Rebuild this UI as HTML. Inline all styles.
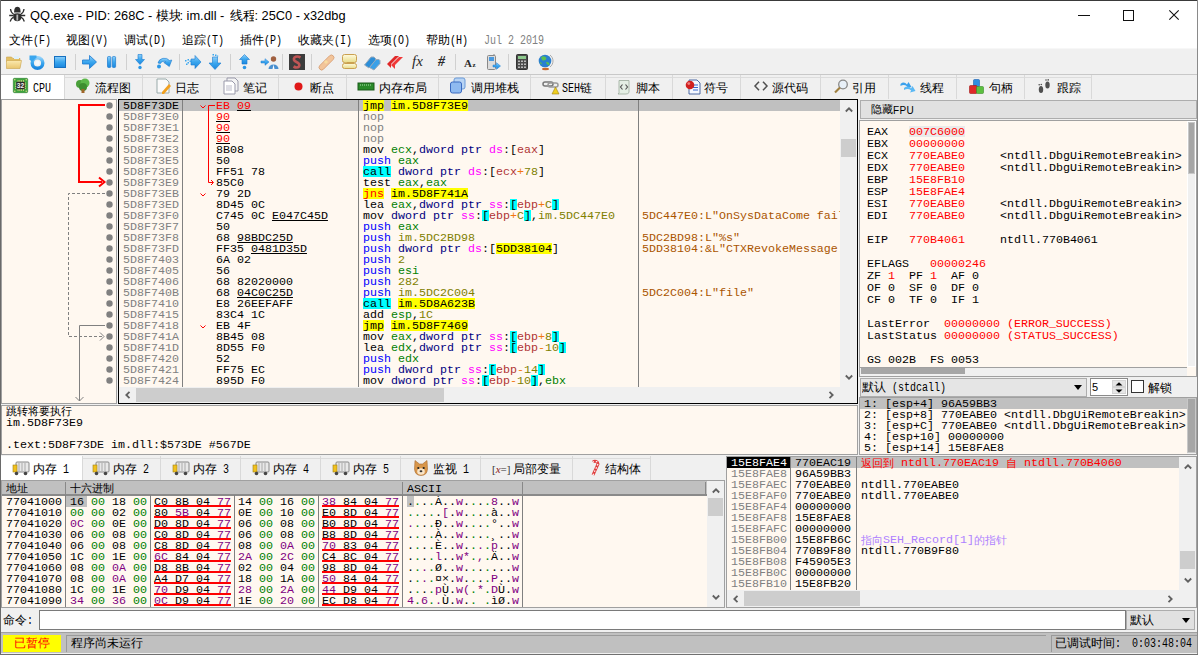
<!DOCTYPE html><html><head><meta charset="utf-8"><style>
html,body{margin:0;padding:0;}
body{width:1198px;height:655px;overflow:hidden;position:relative;background:#f0f0f0;font-family:"Liberation Sans",sans-serif;}
div{box-sizing:border-box;}
.t{position:absolute;white-space:pre;}
.m{font-family:"Liberation Mono",monospace;font-size:11.667px;line-height:11px;}
.ui{font-family:"Liberation Sans",sans-serif;font-size:12px;line-height:14px;}
.cj{display:inline-block;font-family:"Liberation Sans",sans-serif;font-size:12px;overflow:hidden;vertical-align:top;}
.as{display:inline-block;font-family:"Liberation Mono",monospace;font-size:12px;vertical-align:top;}
.asi{display:inline-block;transform:translateY(1px) scaleX(0.8333);transform-origin:0 0;}
.sep{position:absolute;width:1px;background:#d0d0d0;}
svg{position:absolute;overflow:visible;}
</style></head><body>

<div style="position:absolute;left:0px;top:0px;width:1198px;height:49px;background:#fff;"></div>
<div style="position:absolute;left:0px;top:0px;width:1198px;height:1px;background:#3a3a3a;"></div>
<svg style="left:0;top:0" width="30" height="30" viewBox="0 0 30 30">
<g fill="#2e2e2e">
<path d="M14 12.5 Q13.5 9 15.5 7.2 Q17.3 6.5 19.2 7.2 Q21.2 9 20.7 12.5z"/>
<path d="M13.3 14 Q17.3 12.6 21.3 14 L21.3 18 Q20.5 21.2 17.3 21.3 Q14.1 21.2 13.3 18z"/>
</g>
<g fill="none" stroke="#2e2e2e" stroke-width="1.3">
<path d="M10.5 9 Q10.8 12.5 13.5 14"/><path d="M24 9 Q23.7 12.5 21 14"/>
<path d="M9.2 15.5 H13.5 M21 15.5 H25.2"/>
<path d="M13.5 17.2 Q11 18.5 10.2 21.5"/><path d="M21 17.2 Q23.5 18.5 24.3 21.5"/>
</g>
<rect x="16.4" y="14.6" width="1.8" height="6" fill="#b8b8b8"/></svg>
<div class="t" style="left:30px;top:8px;font-size:12.8px;line-height:16px;color:#000;font-family:'Liberation Sans',sans-serif">QQ.exe - PID: 268C - </div>
<div class="t" style="left:155.5px;top:8px;font-size:12.5px;line-height:16px;color:#000;font-family:'Liberation Sans',sans-serif"><span style="display:inline-block;width:24px;overflow:hidden;vertical-align:top;">模块</span></div>
<div class="t" style="left:179.5px;top:8px;font-size:12.8px;line-height:16px;color:#000;font-family:'Liberation Sans',sans-serif">: im.dll - </div>
<div class="t" style="left:230px;top:8px;font-size:12.5px;line-height:16px;color:#000;font-family:'Liberation Sans',sans-serif"><span style="display:inline-block;width:24px;overflow:hidden;vertical-align:top;">线程</span></div>
<div class="t" style="left:254.5px;top:8px;font-size:12.8px;line-height:16px;color:#000;font-family:'Liberation Sans',sans-serif">: 25C0 - x32dbg</div>
<div style="position:absolute;left:1078px;top:15px;width:12px;height:1px;background:#111;"></div>
<div style="position:absolute;left:1123px;top:10px;width:11px;height:11px;border:1px solid #111;"></div>
<svg style="left:1169px;top:10px" width="10" height="10" viewBox="0 0 10 10"><path d="M0.3 0.3 L9.7 9.7 M9.7 0.3 L0.3 9.7" stroke="#111" stroke-width="1.1"/></svg>
<div class="t ui" style="left:9px;top:33px;color:#000;"><span class="cj" style="width:24px">文件</span><span class="as" style="width:18px"><span class="asi">(F)</span></span></div>
<div class="t ui" style="left:66px;top:33px;color:#000;"><span class="cj" style="width:24px">视图</span><span class="as" style="width:18px"><span class="asi">(V)</span></span></div>
<div class="t ui" style="left:124px;top:33px;color:#000;"><span class="cj" style="width:24px">调试</span><span class="as" style="width:18px"><span class="asi">(D)</span></span></div>
<div class="t ui" style="left:182px;top:33px;color:#000;"><span class="cj" style="width:24px">追踪</span><span class="as" style="width:18px"><span class="asi">(T)</span></span></div>
<div class="t ui" style="left:240px;top:33px;color:#000;"><span class="cj" style="width:24px">插件</span><span class="as" style="width:18px"><span class="asi">(P)</span></span></div>
<div class="t ui" style="left:298px;top:33px;color:#000;"><span class="cj" style="width:36px">收藏夹</span><span class="as" style="width:18px"><span class="asi">(I)</span></span></div>
<div class="t ui" style="left:368px;top:33px;color:#000;"><span class="cj" style="width:24px">选项</span><span class="as" style="width:18px"><span class="asi">(O)</span></span></div>
<div class="t ui" style="left:426px;top:33px;color:#000;"><span class="cj" style="width:24px">帮助</span><span class="as" style="width:18px"><span class="asi">(H)</span></span></div>
<div class="t ui" style="left:484px;top:33px;color:#808080;"><span class="as" style="width:60px"><span class="asi">Jul 2 2019</span></span></div>
<div style="position:absolute;left:0px;top:49px;width:1198px;height:25px;background:#f0f0f0;"></div>
<div style="position:absolute;left:0px;top:48px;width:1198px;height:1px;background:#f7f7f7;"></div>
<div style="position:absolute;left:1px;top:74px;width:1196px;height:1px;background:#c8c8c8;"></div>
<div style="position:absolute;left:75px;top:54px;width:1px;height:16px;background:#d0d0d0;"></div>
<div style="position:absolute;left:126px;top:54px;width:1px;height:16px;background:#d0d0d0;"></div>
<div style="position:absolute;left:179px;top:54px;width:1px;height:16px;background:#d0d0d0;"></div>
<div style="position:absolute;left:230px;top:54px;width:1px;height:16px;background:#d0d0d0;"></div>
<div style="position:absolute;left:282px;top:54px;width:1px;height:16px;background:#d0d0d0;"></div>
<div style="position:absolute;left:311px;top:54px;width:1px;height:16px;background:#d0d0d0;"></div>
<div style="position:absolute;left:455px;top:54px;width:1px;height:16px;background:#d0d0d0;"></div>
<div style="position:absolute;left:508px;top:54px;width:1px;height:16px;background:#d0d0d0;"></div>
<svg style="left:0;top:0;width:0;height:0"><defs>
<linearGradient id="gb" x1="0" y1="0" x2="0" y2="1"><stop offset="0" stop-color="#8fd0fa"/><stop offset="0.5" stop-color="#3aa6ee"/><stop offset="1" stop-color="#1a86de"/></linearGradient>
<linearGradient id="gf" x1="0" y1="0" x2="0" y2="1"><stop offset="0" stop-color="#fbe9b0"/><stop offset="1" stop-color="#e9c66e"/></linearGradient>
<linearGradient id="gy" x1="0" y1="0" x2="0" y2="1"><stop offset="0" stop-color="#fffbe0"/><stop offset="1" stop-color="#e8dc8a"/></linearGradient>
</defs></svg>
<svg style="left:6.0px;top:54.0px" width="16" height="16" viewBox="0 0 16 16"><path d="M0.5 3 h5 l1.5 1.5 h7 v3 h-13.5z" fill="#e3bf62" stroke="#c9a24a" stroke-width="0.6"/><rect x="8" y="2" width="5" height="3" fill="#dff0fa"/><path d="M0.5 6.5 h15 l-1.5 8 h-13.5z" fill="url(#gf)" stroke="#c9a24a" stroke-width="0.6"/></svg>
<svg style="left:29.0px;top:54.0px" width="16" height="16" viewBox="0 0 16 16"><circle cx="8.5" cy="9" r="5.3" fill="none" stroke="url(#gb)" stroke-width="3.4"/><path d="M0.5 1.5 L7.5 1.5 L7.5 3.5 L3 8 L0.5 5.5z" fill="#3aa6ee"/><circle cx="8.5" cy="9" r="2.2" fill="#f4f8fc"/></svg>
<svg style="left:54.0px;top:55.5px" width="12" height="12" viewBox="0 0 12 12"><rect x="0.5" y="0.5" width="11" height="11" fill="url(#gb)" stroke="#1670c0"/></svg>
<svg style="left:81.5px;top:54.5px" width="15" height="14" viewBox="0 0 15 14"><path d="M0.5 5 h7 v-4.5 l7 6.5 l-7 6.5 v-4.5 h-7z" fill="url(#gb)" stroke="#1a7ad0" stroke-width="0.8"/></svg>
<svg style="left:107.0px;top:55.5px" width="9" height="12" viewBox="0 0 9 12"><rect x="0.5" y="0.5" width="3.3" height="11" rx="1" fill="url(#gb)" stroke="#1a7ad0" stroke-width="0.7"/><rect x="5.3" y="0.5" width="3.3" height="11" rx="1" fill="url(#gb)" stroke="#1a7ad0" stroke-width="0.7"/></svg>
<svg style="left:135.0px;top:54.0px" width="10" height="16" viewBox="0 0 10 16"><path d="M3 0.5 h4 v5 h2.5 l-4.5 5 l-4.5 -5 h2.5z" fill="url(#gb)" stroke="#1a7ad0" stroke-width="0.6"/><circle cx="5" cy="13.5" r="1.7" fill="#2a96e6"/></svg>
<svg style="left:155.5px;top:54.0px" width="17" height="16" viewBox="0 0 17 16"><path d="M2 9 a6.5 6 0 0 1 11.5 -2.5 l2.3 -0.5 l-2.5 6.5 l-5.5 -4 l2.2 -0.6 a3.6 3.2 0 0 0 -5.5 1.6z" fill="url(#gb)" stroke="#1a7ad0" stroke-width="0.6"/><circle cx="3" cy="12.5" r="2" fill="#2a96e6"/></svg>
<svg style="left:184.5px;top:54.5px" width="17" height="14" viewBox="0 0 17 14"><path d="M6 4 h4 v-3.5 l6 6.5 l-6 6.5 v-3.5 h-4z" fill="url(#gb)" stroke="#1a7ad0" stroke-width="0.6"/><g fill="#3aa6ee"><rect x="0" y="5" width="1.5" height="1.5"/><rect x="2.5" y="4" width="1.5" height="1.5"/><rect x="2.5" y="7" width="1.5" height="1.5"/><rect x="4.5" y="5.5" width="1.5" height="1.5"/><rect x="1" y="8.5" width="1.5" height="1.5"/></g></svg>
<svg style="left:209.0px;top:54.0px" width="12" height="16" viewBox="0 0 12 16"><path d="M3.5 3 h5 v6 h3.5 l-6 6.5 l-6 -6.5 h3.5z" fill="url(#gb)" stroke="#1a7ad0" stroke-width="0.6"/><g fill="#3aa6ee"><rect x="3.5" y="0" width="1.5" height="1.5"/><rect x="6" y="0.5" width="1.5" height="1.5"/><rect x="8" y="1.5" width="1.2" height="1.2"/></g></svg>
<svg style="left:238.5px;top:54.0px" width="11" height="16" viewBox="0 0 11 16"><path d="M5.5 0.5 l5 5 h-2.5 v4.5 h-5 v-4.5 h-2.5z" fill="url(#gb)" stroke="#1a7ad0" stroke-width="0.6"/><circle cx="5.5" cy="13.5" r="1.8" fill="#2a96e6"/></svg>
<svg style="left:261.0px;top:54.0px" width="18" height="16" viewBox="0 0 18 16"><path d="M0 7 h4 v-2.3 l4 3.3 l-4 3.3 v-2.3 h-4z" fill="url(#gb)" stroke="#1a7ad0" stroke-width="0.5"/><circle cx="12.5" cy="5" r="2.7" fill="#a06040"/><path d="M7.5 15 a5 4.5 0 0 1 10 0z" fill="#4a90d0"/><path d="M12.5 10.5 l-1 4.5 h2z" fill="#fff"/></svg>
<svg style="left:289.0px;top:54.0px" width="16" height="16" viewBox="0 0 16 16"><rect x="0" y="0" width="16" height="16" fill="#3d3d3d"/><path d="M11.5 3.5 Q8 1.5 5.5 3.5 Q3.5 6 7.5 8 Q11.5 10 10 12.5 Q8 14.5 4.5 12.5" fill="none" stroke="#c05555" stroke-width="2.6"/></svg>
<svg style="left:317.5px;top:53.5px" width="17" height="17" viewBox="0 0 17 17"><path d="M1.8 11.5 L11.5 1.8 a2.6 2.6 0 0 1 3.7 3.7 L5.5 15.2 a2.6 2.6 0 0 1 -3.7 -3.7z" fill="#f2c49a" stroke="#d49a6e" stroke-width="0.8"/><rect x="6.5" y="6.5" width="3" height="3" fill="#f8dca0" transform="rotate(45 8 8)"/></svg>
<svg style="left:341.5px;top:54.0px" width="15" height="16" viewBox="0 0 15 16"><rect x="0.5" y="0.5" width="14" height="8" rx="2" fill="url(#gy)" stroke="#caa050"/><path d="M3 8.5 v2 l2 -2" fill="#e8dc8a" stroke="#caa050" stroke-width="0.6"/><rect x="0.5" y="9.5" width="14" height="5" rx="2" fill="url(#gy)" stroke="#caa050"/></svg>
<svg style="left:363.5px;top:53.5px" width="17" height="17" viewBox="0 0 17 17"><path d="M0.5 11 L7 3 h3 l1.5 1.5 v2.5 L5 14z" fill="#2c8ed8" stroke="#9ab" stroke-width="1"/><path d="M5.5 13.5 L12 5.5 h3 l1 1 v3 L10 16z" fill="#3aa0e8" stroke="#9ab" stroke-width="1"/></svg>
<svg style="left:387.0px;top:55.0px" width="16" height="14" viewBox="0 0 16 14"><path d="M0 9 L8 1 h4 l-8 8 l0 4z" fill="#e02828"/><path d="M4 10 L12 2 h4 l-8 8 l0 4z" fill="#f03838"/></svg>
<svg style="left:409.5px;top:53.0px" width="15" height="16" viewBox="0 0 15 16"><text x="7.5" y="12.5" font-size="15" text-anchor="middle" fill="#2a2a2a" font-family="Liberation Serif" font-style="italic">fx</text></svg>
<svg style="left:435.5px;top:53.0px" width="11" height="16" viewBox="0 0 11 16"><text x="5.5" y="12.5" font-size="14" text-anchor="middle" fill="#2a2a2a" font-family="Liberation Serif" font-weight="bold" font-style="italic">#</text></svg>
<svg style="left:463.5px;top:57.0px" width="13" height="10" viewBox="0 0 13 10"><text x="4" y="9.5" font-size="11" text-anchor="middle" fill="#2a2a2a" font-family="Liberation Serif" font-weight="bold">A</text><text x="10" y="9.5" font-size="7" text-anchor="middle" fill="#2a2a2a" font-family="Liberation Serif" font-weight="bold">z</text></svg>
<svg style="left:487.0px;top:54.0px" width="14" height="16" viewBox="0 0 14 16"><rect x="0.5" y="1.5" width="8" height="14" rx="1" fill="#dcdcdc" stroke="#888"/><rect x="2" y="3" width="5" height="4" fill="#4a9ae0"/><path d="M7 0 v2" stroke="#888"/><path d="M6 11 h3.5 v-2.3 l4 3.3 l-4 3.3 v-2.3 h-3.5z" fill="url(#gb)" stroke="#1a7ad0" stroke-width="0.5"/></svg>
<svg style="left:515.5px;top:54.0px" width="12" height="16" viewBox="0 0 12 16"><rect x="0.5" y="0.5" width="11" height="15" rx="1" fill="#4a4a4a" stroke="#333"/><rect x="2" y="2" width="8" height="3" fill="#8cc88c"/><g fill="#bbb"><rect x="2" y="6.5" width="2" height="1.5"/><rect x="5" y="6.5" width="2" height="1.5"/><rect x="8" y="6.5" width="2" height="1.5"/><rect x="2" y="9.5" width="2" height="1.5"/><rect x="5" y="9.5" width="2" height="1.5"/><rect x="8" y="9.5" width="2" height="1.5"/><rect x="2" y="12.5" width="2" height="1.5"/><rect x="5" y="12.5" width="2" height="1.5"/><rect x="8" y="12.5" width="2" height="1.5"/></g></svg>
<svg style="left:537.5px;top:53.5px" width="15" height="16" viewBox="0 0 15 16"><circle cx="7" cy="7" r="6.3" fill="#2a7fd0"/><path d="M3 3.5 q3 -2.5 5.5 0.5 q-0.5 3 -4 2.5z M8 8 q3.5 -0.5 3.5 2.5 q-2.5 2 -3.5 -2.5z M1.5 8 q2 0 2.5 2 q-1 1 -2.5 -2z" fill="#5cc050"/><path d="M12 1 a7.5 7.5 0 0 1 0 12" fill="none" stroke="#999" stroke-width="0.8"/><ellipse cx="7.5" cy="15" rx="3.5" ry="1.2" fill="#c86a30"/></svg>
<div style="position:absolute;left:1px;top:75px;width:63px;height:24px;background:#fff;"></div>
<div style="position:absolute;left:64px;top:77px;width:1027px;height:1px;background:#dcdcdc;"></div>
<div style="position:absolute;left:64px;top:75px;width:1px;height:24px;background:#d9d9d9;"></div>
<div style="position:absolute;left:142px;top:75px;width:1px;height:24px;background:#d9d9d9;"></div>
<div style="position:absolute;left:210px;top:75px;width:1px;height:24px;background:#d9d9d9;"></div>
<div style="position:absolute;left:278px;top:75px;width:1px;height:24px;background:#d9d9d9;"></div>
<div style="position:absolute;left:346px;top:75px;width:1px;height:24px;background:#d9d9d9;"></div>
<div style="position:absolute;left:438px;top:75px;width:1px;height:24px;background:#d9d9d9;"></div>
<div style="position:absolute;left:530px;top:75px;width:1px;height:24px;background:#d9d9d9;"></div>
<div style="position:absolute;left:605px;top:75px;width:1px;height:24px;background:#d9d9d9;"></div>
<div style="position:absolute;left:672px;top:75px;width:1px;height:24px;background:#d9d9d9;"></div>
<div style="position:absolute;left:740px;top:75px;width:1px;height:24px;background:#d9d9d9;"></div>
<div style="position:absolute;left:820px;top:75px;width:1px;height:24px;background:#d9d9d9;"></div>
<div style="position:absolute;left:888px;top:75px;width:1px;height:24px;background:#d9d9d9;"></div>
<div style="position:absolute;left:956px;top:75px;width:1px;height:24px;background:#d9d9d9;"></div>
<div style="position:absolute;left:1024px;top:75px;width:1px;height:24px;background:#d9d9d9;"></div>
<div style="position:absolute;left:1091px;top:75px;width:1px;height:24px;background:#d9d9d9;"></div>
<svg style="left:13px;top:78px" width="15" height="15" viewBox="0 0 15 15"><rect x="0.3" y="0.3" width="14.4" height="14.4" rx="1.2" fill="#3da53d" stroke="#2a7a2a" stroke-width="0.6"/><rect x="4.6" y="2.2" width="0.9" height="1.8" fill="#f0d890"/><rect x="4.6" y="11" width="0.9" height="1.8" fill="#f0d890"/><rect x="6.4" y="2.2" width="0.9" height="1.8" fill="#f0d890"/><rect x="6.4" y="11" width="0.9" height="1.8" fill="#f0d890"/><rect x="8.2" y="2.2" width="0.9" height="1.8" fill="#f0d890"/><rect x="8.2" y="11" width="0.9" height="1.8" fill="#f0d890"/><rect x="10" y="2.2" width="0.9" height="1.8" fill="#f0d890"/><rect x="10" y="11" width="0.9" height="1.8" fill="#f0d890"/><rect x="2.2" y="4.6" width="1.8" height="0.9" fill="#f0d890"/><rect x="11" y="4.6" width="1.8" height="0.9" fill="#f0d890"/><rect x="2.2" y="6.4" width="1.8" height="0.9" fill="#f0d890"/><rect x="11" y="6.4" width="1.8" height="0.9" fill="#f0d890"/><rect x="2.2" y="8.2" width="1.8" height="0.9" fill="#f0d890"/><rect x="11" y="8.2" width="1.8" height="0.9" fill="#f0d890"/><rect x="2.2" y="10" width="1.8" height="0.9" fill="#f0d890"/><rect x="11" y="10" width="1.8" height="0.9" fill="#f0d890"/><circle cx="1.8" cy="1.8" r="0.7" fill="#f0d890"/><circle cx="13.2" cy="1.8" r="0.7" fill="#f0d890"/><circle cx="1.8" cy="13.2" r="0.7" fill="#f0d890"/><circle cx="13.2" cy="13.2" r="0.7" fill="#f0d890"/><rect x="3.2" y="3.8" width="8.6" height="7.4" rx="0.8" fill="#2a2a2a"/><text x="7.5" y="10" font-size="6.6" text-anchor="middle" fill="#f4f4f4" font-family="Liberation Sans" font-weight="bold">32</text></svg>
<div class="t ui" style="left:33px;top:81px;color:#000;"><span class="as" style="width:18px"><span class="asi">CPU</span></span></div>
<svg style="left:75px;top:78px" width="15" height="16" viewBox="0 0 15 16"><circle cx="5" cy="6" r="4" fill="#4aa03a"/><circle cx="10" cy="5" r="4.5" fill="#5cb84a"/><circle cx="8" cy="9" r="4" fill="#3e8e30"/><rect x="6.5" y="11" width="3" height="4" fill="#a0662a"/></svg>
<div class="t ui" style="left:95px;top:81px;color:#000;"><span class="cj" style="width:36px">流程图</span></div>
<svg style="left:156px;top:78px" width="16" height="16" viewBox="0 0 16 16"><path d="M1 1 h9 l3 3 v11 h-12z" fill="#fafafa" stroke="#9aa"/><path d="M6 14 l7 -8 l2 2 l-7 8 h-2z" fill="#f0a020"/></svg>
<div class="t ui" style="left:175px;top:81px;color:#000;"><span class="cj" style="width:24px">日志</span></div>
<svg style="left:223px;top:78px" width="16" height="16" viewBox="0 0 16 16"><path d="M4 0 h8 l3 3 v10 h-11z" fill="#f4f4f4" stroke="#99a"/><path d="M1 3 h8 l3 3 v10 h-11z" fill="#fff" stroke="#99a"/><path d="M3 8h6M3 10h6M3 12h6" stroke="#aab" stroke-width="0.8"/></svg>
<div class="t ui" style="left:243px;top:81px;color:#000;"><span class="cj" style="width:24px">笔记</span></div>
<svg style="left:294px;top:82px" width="9" height="9" viewBox="0 0 9 9"><circle cx="4.5" cy="4.5" r="4" fill="#e01818"/></svg>
<div class="t ui" style="left:310px;top:81px;color:#000;"><span class="cj" style="width:24px">断点</span></div>
<svg style="left:358px;top:82px" width="16" height="9" viewBox="0 0 16 9"><rect x="0" y="1" width="16" height="7" fill="#2a8a2a" stroke="#1a5a1a"/><path d="M2 3h1M4 3h1M6 3h1M8 3h1M10 3h1M12 3h1" stroke="#b0e0b0"/></svg>
<div class="t ui" style="left:379px;top:81px;color:#000;"><span class="cj" style="width:48px">内存布局</span></div>
<svg style="left:450px;top:78px" width="16" height="16" viewBox="0 0 16 16"><rect x="4" y="0" width="11" height="11" rx="2" fill="#b8d4f4" stroke="#6a9ad8"/><rect x="0.5" y="4" width="11" height="11" rx="2" fill="#8fbaf0" stroke="#3a6ac0"/></svg>
<div class="t ui" style="left:471px;top:81px;color:#000;"><span class="cj" style="width:48px">调用堆栈</span></div>
<svg style="left:543px;top:80px" width="16" height="15" viewBox="0 0 16 15"><rect x="0" y="2" width="10" height="4" rx="2" fill="none" stroke="#777" stroke-width="1.5"/><rect x="5" y="3" width="10" height="4" rx="2" fill="none" stroke="#999" stroke-width="1.5"/><path d="M9 14 l3.5 -7 l3.5 7z" fill="#f0d020" stroke="#a08010" stroke-width="0.6"/></svg>
<div class="t ui" style="left:562px;top:81px;color:#000;"><span class="as" style="width:18px"><span class="asi">SEH</span></span><span class="cj" style="width:12px">链</span></div>
<svg style="left:617px;top:79px" width="14" height="16" viewBox="0 0 14 16"><path d="M2 1.5 h10 v12 q-1 1.5 -3 1.5 h-8 q1.5 -1 1 -2.5z" fill="#e4eee4" stroke="#9aaa9a" stroke-width="0.8"/><path d="M5.5 5.5 L3.5 8 L5.5 10.5 M8.5 5.5 L10.5 8 L8.5 10.5" fill="none" stroke="#555" stroke-width="1.2"/></svg>
<div class="t ui" style="left:636px;top:81px;color:#000;"><span class="cj" style="width:24px">脚本</span></div>
<svg style="left:685px;top:79px" width="16" height="16" viewBox="0 0 16 16"><path d="M4 1 h8 l3 3 v11 h-11z" fill="#f4f8ff" stroke="#3a5a9a" stroke-width="0.9"/><path d="M8 6h5M8 8.5h5M8 11h5" stroke="#3a6ad0" stroke-width="1"/><circle cx="5" cy="6" r="4.3" fill="#d02020"/><circle cx="3.8" cy="4.6" r="1.4" fill="#f08080"/></svg>
<div class="t ui" style="left:704px;top:81px;color:#000;"><span class="cj" style="width:24px">符号</span></div>
<svg style="left:754px;top:81px" width="14" height="10" viewBox="0 0 14 10"><path d="M5 0.8 L1 5 L5 9.2 M9 0.8 L13 5 L9 9.2" fill="none" stroke="#505050" stroke-width="1.5"/></svg>
<div class="t ui" style="left:772px;top:81px;color:#000;"><span class="cj" style="width:36px">源代码</span></div>
<svg style="left:834px;top:79px" width="14" height="15" viewBox="0 0 14 15"><circle cx="9" cy="5.5" r="4.3" fill="#e8f0f8" stroke="#888" stroke-width="1.3"/><path d="M6 8.5 L1 13.5" stroke="#a08040" stroke-width="2.2"/></svg>
<div class="t ui" style="left:852px;top:81px;color:#000;"><span class="cj" style="width:24px">引用</span></div>
<svg style="left:900px;top:80px" width="16" height="14" viewBox="0 0 16 14"><path d="M0.5 4 Q4 1 7 4.5 l1.5 -2.5 l3 5 l-5.5 1.5 l1.2 -2 Q4 4 0.5 6z" fill="#3aa0ec"/><path d="M4 8 Q8 5 11 8.5 l1.5 -2.5 l3 5 l-5.5 1.5 l1.2 -2 Q8 8 4 10z" fill="#5ab8f4"/></svg>
<div class="t ui" style="left:920px;top:81px;color:#000;"><span class="cj" style="width:24px">线程</span></div>
<svg style="left:969px;top:79px" width="15" height="15" viewBox="0 0 15 15"><rect x="4.5" y="0.5" width="6" height="7" rx="1" fill="#2f8ee0" stroke="#1a60b0" stroke-width="0.6"/><rect x="0.5" y="6.5" width="7.5" height="8" rx="1" fill="#e02828" stroke="#a01818" stroke-width="0.6"/><rect x="7.5" y="7.5" width="7" height="7" rx="1" fill="#5cc040" stroke="#3a8a2a" stroke-width="0.6"/></svg>
<div class="t ui" style="left:989px;top:81px;color:#000;"><span class="cj" style="width:24px">句柄</span></div>
<svg style="left:1037px;top:79px" width="14" height="15" viewBox="0 0 14 15"><ellipse cx="4" cy="10.5" rx="2.2" ry="3.6" fill="#505050"/><ellipse cx="10.5" cy="6" rx="2.2" ry="3.6" fill="#505050"/><circle cx="2.2" cy="5.8" r="0.8" fill="#505050"/><circle cx="4.3" cy="5.5" r="0.8" fill="#505050"/><circle cx="9" cy="1" r="0.8" fill="#505050"/><circle cx="11.2" cy="0.9" r="0.8" fill="#505050"/></svg>
<div class="t ui" style="left:1057px;top:81px;color:#000;"><span class="cj" style="width:24px">跟踪</span></div>
<div style="position:absolute;left:1px;top:99px;width:116px;height:305px;background:#fff8f0;border:1px solid #a0a0a0;"></div>
<svg style="left:0;top:0" width="120" height="410" viewBox="0 0 120 410"><circle cx="109.5" cy="105.5" r="3.2" fill="#808080"/><circle cx="109.5" cy="116.5" r="3.2" fill="#808080"/><circle cx="109.5" cy="127.5" r="3.2" fill="#808080"/><circle cx="109.5" cy="138.5" r="3.2" fill="#808080"/><circle cx="109.5" cy="149.5" r="3.2" fill="#808080"/><circle cx="109.5" cy="160.5" r="3.2" fill="#808080"/><circle cx="109.5" cy="171.5" r="3.2" fill="#808080"/><circle cx="109.5" cy="182.5" r="3.2" fill="#808080"/><circle cx="109.5" cy="193.5" r="3.2" fill="#808080"/><circle cx="109.5" cy="204.5" r="3.2" fill="#808080"/><circle cx="109.5" cy="215.5" r="3.2" fill="#808080"/><circle cx="109.5" cy="226.5" r="3.2" fill="#808080"/><circle cx="109.5" cy="237.5" r="3.2" fill="#808080"/><circle cx="109.5" cy="248.5" r="3.2" fill="#808080"/><circle cx="109.5" cy="259.5" r="3.2" fill="#808080"/><circle cx="109.5" cy="270.5" r="3.2" fill="#808080"/><circle cx="109.5" cy="281.5" r="3.2" fill="#808080"/><circle cx="109.5" cy="292.5" r="3.2" fill="#808080"/><circle cx="109.5" cy="303.5" r="3.2" fill="#808080"/><circle cx="109.5" cy="314.5" r="3.2" fill="#808080"/><circle cx="109.5" cy="325.5" r="3.2" fill="#808080"/><circle cx="109.5" cy="336.5" r="3.2" fill="#808080"/><circle cx="109.5" cy="347.5" r="3.2" fill="#808080"/><circle cx="109.5" cy="358.5" r="3.2" fill="#808080"/><circle cx="109.5" cy="369.5" r="3.2" fill="#808080"/><circle cx="109.5" cy="380.5" r="3.2" fill="#808080"/><path d="M105 105 H79 V182 H102" fill="none" stroke="#ff0000" stroke-width="2"/><path d="M99 177.5 L104.5 182 L99 186.5" fill="none" stroke="#ff0000" stroke-width="2"/><path d="M105 193.5 H68.5 V336.5 H104" fill="none" stroke="#808080" stroke-width="1" stroke-dasharray="3,2"/><path d="M100 332.5 L104 336.5 L100 340.5" fill="none" stroke="#808080" stroke-width="1"/><path d="M105 325.5 H79.5 V401" fill="none" stroke="#808080" stroke-width="1"/><path d="M75.5 397 L79.5 401 L83.5 397" fill="none" stroke="#808080" stroke-width="1"/></svg>
<div style="position:absolute;left:118px;top:99px;width:740px;height:305px;background:#fff8f0;border:1px solid #000;"></div>
<div style="position:absolute;left:119px;top:100px;width:721px;height:11px;background:#c0c0c0;"></div>
<div style="position:absolute;left:182px;top:100px;width:1px;height:287px;background:#808080;"></div>
<div style="position:absolute;left:358px;top:100px;width:1px;height:287px;background:#808080;"></div>
<div style="position:absolute;left:638px;top:100px;width:1px;height:287px;background:#808080;"></div>
<div style="position:absolute;left:119px;top:100px;width:722px;height:286px;overflow:hidden">
<div class="t m" style="left:4px;top:1px;color:#000;">5D8F73DE</div>
<div class="t m" style="left:97px;top:1px;color:#000;"><span style="color:#ff0000;">EB</span><span style=""> </span><span style="color:#ff0000;text-decoration:underline;text-decoration-color:#000;text-underline-offset:1px;">09</span></div>
<svg style="left:81px;top:5px" width="6" height="4" viewBox="0 0 6 4"><path d="M0.5 0.5 L3 3 L5.5 0.5" fill="none" stroke="#ff0000" stroke-width="1"/></svg>
<div class="t m" style="left:244px;top:1px;color:#000;"><span style="color:#000;background:#ffff00;display:inline-block;height:10px;vertical-align:top;margin-top:-1px;padding-top:1px;">jmp</span><span style=""> </span><span style="color:#000;background:#ffff00;display:inline-block;height:10px;vertical-align:top;margin-top:-1px;padding-top:1px;">im.5D8F73E9</span></div>
<div class="t m" style="left:4px;top:12px;color:#808080;">5D8F73E0</div>
<div class="t m" style="left:97px;top:12px;color:#000;"><span style="color:#ff0000;text-decoration:underline;text-decoration-color:#000;text-underline-offset:1px;">90</span></div>
<div class="t m" style="left:244px;top:12px;color:#000;"><span style="color:#808080;">nop</span></div>
<div class="t m" style="left:4px;top:23px;color:#808080;">5D8F73E1</div>
<div class="t m" style="left:97px;top:23px;color:#000;"><span style="color:#ff0000;text-decoration:underline;text-decoration-color:#000;text-underline-offset:1px;">90</span></div>
<div class="t m" style="left:244px;top:23px;color:#000;"><span style="color:#808080;">nop</span></div>
<div class="t m" style="left:4px;top:34px;color:#808080;">5D8F73E2</div>
<div class="t m" style="left:97px;top:34px;color:#000;"><span style="color:#ff0000;text-decoration:underline;text-decoration-color:#000;text-underline-offset:1px;">90</span></div>
<div class="t m" style="left:244px;top:34px;color:#000;"><span style="color:#808080;">nop</span></div>
<div class="t m" style="left:4px;top:45px;color:#808080;">5D8F73E3</div>
<div class="t m" style="left:97px;top:45px;color:#000;"><span style="color:#000;">8B08</span></div>
<div class="t m" style="left:244px;top:45px;color:#000;"><span style="color:#000;">mov </span><span style="color:#008000;">ecx</span><span style="">,</span><span style="color:#000080;">dword ptr</span><span style=""> </span><span style="color:#ff00ff;">ds</span><span style="color:#000;">:</span><span style="color:#000;">[</span><span style="color:#b03434;">eax</span><span style="color:#000;">]</span></div>
<div class="t m" style="left:4px;top:56px;color:#808080;">5D8F73E5</div>
<div class="t m" style="left:97px;top:56px;color:#000;"><span style="color:#000;">50</span></div>
<div class="t m" style="left:244px;top:56px;color:#000;"><span style="color:#0000ff;">push</span><span style=""> </span><span style="color:#008000;">eax</span></div>
<div class="t m" style="left:4px;top:67px;color:#808080;">5D8F73E6</div>
<div class="t m" style="left:97px;top:67px;color:#000;"><span style="color:#000;">FF51 78</span></div>
<div class="t m" style="left:244px;top:67px;color:#000;"><span style="color:#000;background:#00ffff;display:inline-block;height:10px;vertical-align:top;margin-top:-1px;padding-top:1px;">call</span><span style=""> </span><span style="color:#000080;">dword ptr</span><span style=""> </span><span style="color:#ff00ff;">ds</span><span style="color:#000;">:</span><span style="color:#000;">[</span><span style="color:#b03434;">ecx</span><span style="color:#f27711;">+</span><span style="color:#808000;">78</span><span style="color:#000;">]</span></div>
<div class="t m" style="left:4px;top:78px;color:#808080;">5D8F73E9</div>
<div class="t m" style="left:97px;top:78px;color:#000;"><span style="color:#000;">85C0</span></div>
<div class="t m" style="left:244px;top:78px;color:#000;"><span style="color:#000;">test </span><span style="color:#008000;">eax</span><span style="">,</span><span style="color:#008000;">eax</span></div>
<div class="t m" style="left:4px;top:89px;color:#808080;">5D8F73EB</div>
<div class="t m" style="left:97px;top:89px;color:#000;"><span style="color:#000;">79 2D</span></div>
<svg style="left:81px;top:93px" width="6" height="4" viewBox="0 0 6 4"><path d="M0.5 0.5 L3 3 L5.5 0.5" fill="none" stroke="#ff0000" stroke-width="1"/></svg>
<div class="t m" style="left:244px;top:89px;color:#000;"><span style="color:#ff0000;background:#ffff00;display:inline-block;height:10px;vertical-align:top;margin-top:-1px;padding-top:1px;">jns</span><span style=""> </span><span style="color:#000;background:#ffff00;display:inline-block;height:10px;vertical-align:top;margin-top:-1px;padding-top:1px;">im.5D8F741A</span></div>
<div class="t m" style="left:4px;top:100px;color:#808080;">5D8F73ED</div>
<div class="t m" style="left:97px;top:100px;color:#000;"><span style="color:#000;">8D45 0C</span></div>
<div class="t m" style="left:244px;top:100px;color:#000;"><span style="color:#000;">lea </span><span style="color:#008000;">eax</span><span style="">,</span><span style="color:#000080;">dword ptr</span><span style=""> </span><span style="color:#ff00ff;">ss</span><span style="color:#000;">:</span><span style="color:#000;background:#00ffff;display:inline-block;height:10px;vertical-align:top;margin-top:-1px;padding-top:1px;">[</span><span style="color:#b03434;">ebp</span><span style="color:#f27711;">+</span><span style="color:#808000;">C</span><span style="color:#000;background:#00ffff;display:inline-block;height:10px;vertical-align:top;margin-top:-1px;padding-top:1px;">]</span></div>
<div class="t m" style="left:4px;top:111px;color:#808080;">5D8F73F0</div>
<div class="t m" style="left:97px;top:111px;color:#000;"><span style="color:#000;">C745 0C </span><span style="color:#000;text-decoration:underline;text-decoration-color:#000;text-underline-offset:1px;">E047C45D</span></div>
<div class="t m" style="left:244px;top:111px;color:#000;"><span style="color:#000;">mov </span><span style="color:#000080;">dword ptr</span><span style=""> </span><span style="color:#ff00ff;">ss</span><span style="color:#000;">:</span><span style="color:#000;background:#00ffff;display:inline-block;height:10px;vertical-align:top;margin-top:-1px;padding-top:1px;">[</span><span style="color:#b03434;">ebp</span><span style="color:#f27711;">+</span><span style="color:#808000;">C</span><span style="color:#000;background:#00ffff;display:inline-block;height:10px;vertical-align:top;margin-top:-1px;padding-top:1px;">]</span><span style="">,</span><span style="color:#808000;">im.5DC447E0</span></div>
<div style="position:absolute;left:523px;top:111px;width:198px;height:11px;overflow:hidden">
<div class="t m" style="left:0px;top:0px;color:#aa5500;">5DC447E0:L"OnSysDataCome failed"</div>
</div>
<div class="t m" style="left:4px;top:122px;color:#808080;">5D8F73F7</div>
<div class="t m" style="left:97px;top:122px;color:#000;"><span style="color:#000;">50</span></div>
<div class="t m" style="left:244px;top:122px;color:#000;"><span style="color:#0000ff;">push</span><span style=""> </span><span style="color:#008000;">eax</span></div>
<div class="t m" style="left:4px;top:133px;color:#808080;">5D8F73F8</div>
<div class="t m" style="left:97px;top:133px;color:#000;"><span style="color:#000;">68 </span><span style="color:#000;text-decoration:underline;text-decoration-color:#000;text-underline-offset:1px;">98BDC25D</span></div>
<div class="t m" style="left:244px;top:133px;color:#000;"><span style="color:#0000ff;">push</span><span style=""> </span><span style="color:#808000;">im.5DC2BD98</span></div>
<div style="position:absolute;left:523px;top:133px;width:198px;height:11px;overflow:hidden">
<div class="t m" style="left:0px;top:0px;color:#aa5500;">5DC2BD98:L"%s"</div>
</div>
<div class="t m" style="left:4px;top:144px;color:#808080;">5D8F73FD</div>
<div class="t m" style="left:97px;top:144px;color:#000;"><span style="color:#000;">FF35 </span><span style="color:#000;text-decoration:underline;text-decoration-color:#000;text-underline-offset:1px;">0481D35D</span></div>
<div class="t m" style="left:244px;top:144px;color:#000;"><span style="color:#0000ff;">push</span><span style=""> </span><span style="color:#000080;">dword ptr</span><span style=""> </span><span style="color:#ff00ff;">ds</span><span style="">:</span><span style="">[</span><span style="color:#000;background:#ffff00;display:inline-block;height:10px;vertical-align:top;margin-top:-1px;padding-top:1px;">5DD38104</span><span style="">]</span></div>
<div style="position:absolute;left:523px;top:144px;width:198px;height:11px;overflow:hidden">
<div class="t m" style="left:0px;top:0px;color:#aa5500;">5DD38104:&amp;L"CTXRevokeMessage:"</div>
</div>
<div class="t m" style="left:4px;top:155px;color:#808080;">5D8F7403</div>
<div class="t m" style="left:97px;top:155px;color:#000;"><span style="color:#000;">6A 02</span></div>
<div class="t m" style="left:244px;top:155px;color:#000;"><span style="color:#0000ff;">push</span><span style=""> </span><span style="color:#808000;">2</span></div>
<div class="t m" style="left:4px;top:166px;color:#808080;">5D8F7405</div>
<div class="t m" style="left:97px;top:166px;color:#000;"><span style="color:#000;">56</span></div>
<div class="t m" style="left:244px;top:166px;color:#000;"><span style="color:#0000ff;">push</span><span style=""> </span><span style="color:#008000;">esi</span></div>
<div class="t m" style="left:4px;top:177px;color:#808080;">5D8F7406</div>
<div class="t m" style="left:97px;top:177px;color:#000;"><span style="color:#000;">68 82020000</span></div>
<div class="t m" style="left:244px;top:177px;color:#000;"><span style="color:#0000ff;">push</span><span style=""> </span><span style="color:#808000;">282</span></div>
<div class="t m" style="left:4px;top:188px;color:#808080;">5D8F740B</div>
<div class="t m" style="left:97px;top:188px;color:#000;"><span style="color:#000;">68 </span><span style="color:#000;text-decoration:underline;text-decoration-color:#000;text-underline-offset:1px;">04C0C25D</span></div>
<div class="t m" style="left:244px;top:188px;color:#000;"><span style="color:#0000ff;">push</span><span style=""> </span><span style="color:#808000;">im.5DC2C004</span></div>
<div style="position:absolute;left:523px;top:188px;width:198px;height:11px;overflow:hidden">
<div class="t m" style="left:0px;top:0px;color:#aa5500;">5DC2C004:L"file"</div>
</div>
<div class="t m" style="left:4px;top:199px;color:#808080;">5D8F7410</div>
<div class="t m" style="left:97px;top:199px;color:#000;"><span style="color:#000;">E8 26EEFAFF</span></div>
<div class="t m" style="left:244px;top:199px;color:#000;"><span style="color:#000;background:#00ffff;display:inline-block;height:10px;vertical-align:top;margin-top:-1px;padding-top:1px;">call</span><span style=""> </span><span style="color:#000;background:#ffff00;display:inline-block;height:10px;vertical-align:top;margin-top:-1px;padding-top:1px;">im.5D8A623B</span></div>
<div class="t m" style="left:4px;top:210px;color:#808080;">5D8F7415</div>
<div class="t m" style="left:97px;top:210px;color:#000;"><span style="color:#000;">83C4 1C</span></div>
<div class="t m" style="left:244px;top:210px;color:#000;"><span style="color:#000;">add </span><span style="color:#008000;">esp</span><span style="">,</span><span style="color:#808000;">1C</span></div>
<div class="t m" style="left:4px;top:221px;color:#808080;">5D8F7418</div>
<div class="t m" style="left:97px;top:221px;color:#000;"><span style="color:#000;">EB 4F</span></div>
<svg style="left:81px;top:225px" width="6" height="4" viewBox="0 0 6 4"><path d="M0.5 0.5 L3 3 L5.5 0.5" fill="none" stroke="#ff0000" stroke-width="1"/></svg>
<div class="t m" style="left:244px;top:221px;color:#000;"><span style="color:#000;background:#ffff00;display:inline-block;height:10px;vertical-align:top;margin-top:-1px;padding-top:1px;">jmp</span><span style=""> </span><span style="color:#000;background:#ffff00;display:inline-block;height:10px;vertical-align:top;margin-top:-1px;padding-top:1px;">im.5D8F7469</span></div>
<div class="t m" style="left:4px;top:232px;color:#808080;">5D8F741A</div>
<div class="t m" style="left:97px;top:232px;color:#000;"><span style="color:#000;">8B45 08</span></div>
<div class="t m" style="left:244px;top:232px;color:#000;"><span style="color:#000;">mov </span><span style="color:#008000;">eax</span><span style="">,</span><span style="color:#000080;">dword ptr</span><span style=""> </span><span style="color:#ff00ff;">ss</span><span style="color:#000;">:</span><span style="color:#000;background:#00ffff;display:inline-block;height:10px;vertical-align:top;margin-top:-1px;padding-top:1px;">[</span><span style="color:#b03434;">ebp</span><span style="color:#f27711;">+</span><span style="color:#808000;">8</span><span style="color:#000;background:#00ffff;display:inline-block;height:10px;vertical-align:top;margin-top:-1px;padding-top:1px;">]</span></div>
<div class="t m" style="left:4px;top:243px;color:#808080;">5D8F741D</div>
<div class="t m" style="left:97px;top:243px;color:#000;"><span style="color:#000;">8D55 F0</span></div>
<div class="t m" style="left:244px;top:243px;color:#000;"><span style="color:#000;">lea </span><span style="color:#008000;">edx</span><span style="">,</span><span style="color:#000080;">dword ptr</span><span style=""> </span><span style="color:#ff00ff;">ss</span><span style="color:#000;">:</span><span style="color:#000;background:#00ffff;display:inline-block;height:10px;vertical-align:top;margin-top:-1px;padding-top:1px;">[</span><span style="color:#b03434;">ebp</span><span style="color:#f27711;">-</span><span style="color:#808000;">10</span><span style="color:#000;background:#00ffff;display:inline-block;height:10px;vertical-align:top;margin-top:-1px;padding-top:1px;">]</span></div>
<div class="t m" style="left:4px;top:254px;color:#808080;">5D8F7420</div>
<div class="t m" style="left:97px;top:254px;color:#000;"><span style="color:#000;">52</span></div>
<div class="t m" style="left:244px;top:254px;color:#000;"><span style="color:#0000ff;">push</span><span style=""> </span><span style="color:#008000;">edx</span></div>
<div class="t m" style="left:4px;top:265px;color:#808080;">5D8F7421</div>
<div class="t m" style="left:97px;top:265px;color:#000;"><span style="color:#000;">FF75 EC</span></div>
<div class="t m" style="left:244px;top:265px;color:#000;"><span style="color:#0000ff;">push</span><span style=""> </span><span style="color:#000080;">dword ptr</span><span style=""> </span><span style="color:#ff00ff;">ss</span><span style="color:#000;">:</span><span style="color:#000;background:#00ffff;display:inline-block;height:10px;vertical-align:top;margin-top:-1px;padding-top:1px;">[</span><span style="color:#b03434;">ebp</span><span style="color:#f27711;">-</span><span style="color:#808000;">14</span><span style="color:#000;background:#00ffff;display:inline-block;height:10px;vertical-align:top;margin-top:-1px;padding-top:1px;">]</span></div>
<div class="t m" style="left:4px;top:276px;color:#808080;">5D8F7424</div>
<div class="t m" style="left:97px;top:276px;color:#000;"><span style="color:#000;">895D F0</span></div>
<div class="t m" style="left:244px;top:276px;color:#000;"><span style="color:#000;">mov </span><span style="color:#000080;">dword ptr</span><span style=""> </span><span style="color:#ff00ff;">ss</span><span style="color:#000;">:</span><span style="color:#000;background:#00ffff;display:inline-block;height:10px;vertical-align:top;margin-top:-1px;padding-top:1px;">[</span><span style="color:#b03434;">ebp</span><span style="color:#f27711;">-</span><span style="color:#808000;">10</span><span style="color:#000;background:#00ffff;display:inline-block;height:10px;vertical-align:top;margin-top:-1px;padding-top:1px;">]</span><span style="">,</span><span style="color:#008000;">ebx</span></div>
</div>
<svg style="left:0;top:0" width="300" height="200" viewBox="0 0 300 200"><path d="M215 105.5 H208.5 V182.5 H213" fill="none" stroke="#ff0000" stroke-width="1"/><path d="M211 180 L213.5 182.5 L211 185" fill="none" stroke="#ff0000" stroke-width="1"/></svg>
<div style="position:absolute;left:840px;top:100px;width:17px;height:287px;background:#f0f0f0;"></div>
<div style="position:absolute;left:841px;top:139px;width:15px;height:18px;background:#cdcdcd;"></div>
<svg style="left:844.5px;top:106.5px" width="8" height="5" viewBox="0 0 8 5"><path d="M0.8 4.5 L4 1.3 L7.2 4.5" fill="none" stroke="#606060" stroke-width="1.8"/></svg>
<svg style="left:844.5px;top:375.0px" width="8" height="5" viewBox="0 0 8 5"><path d="M0.8 0.5 L4 3.7 L7.2 0.5" fill="none" stroke="#606060" stroke-width="1.8"/></svg>
<div style="position:absolute;left:119px;top:387px;width:721px;height:16px;background:#f0f0f0;"></div>
<div style="position:absolute;left:136px;top:388px;width:308px;height:14px;background:#cdcdcd;"></div>
<svg style="left:124.5px;top:391.0px" width="5" height="8" viewBox="0 0 5 8"><path d="M4.5 0.8 L1.3 4 L4.5 7.2" fill="none" stroke="#606060" stroke-width="1.8"/></svg>
<svg style="left:828.5px;top:391.0px" width="5" height="8" viewBox="0 0 5 8"><path d="M0.5 0.8 L3.7 4 L0.5 7.2" fill="none" stroke="#606060" stroke-width="1.8"/></svg>
<div style="position:absolute;left:840px;top:387px;width:17px;height:16px;background:#f0f0f0;"></div>
<div style="position:absolute;left:858px;top:99px;width:340px;height:278px;background:#f0f0f0;"></div>
<div style="position:absolute;left:860px;top:100px;width:337px;height:19px;background:#e1e1e1;border:1px solid #adadad;"></div>
<div class="t" style="left:871px;top:102px;font-size:11px;line-height:14px"><span style="display:inline-block;width:22px;overflow:hidden;vertical-align:top;">隐藏</span><span style="font-size:10px;letter-spacing:0.3px;position:relative;top:1px">FPU</span></div>
<div style="position:absolute;left:859px;top:120px;width:338px;height:257px;background:#fff8f0;border:1px solid #a0a0a0;"></div>
<div class="t m" style="left:867px;top:127px;color:#000;"><span style="color:#000;">EAX</span>   <span style="color:#ff0000;background:#eaeaea;display:inline-block;height:10px;vertical-align:top;margin-top:-1px;padding-top:1px;">007C6000</span></div>
<div class="t m" style="left:867px;top:139px;color:#000;">EBX   <span style="color:#ff0000;">00000000</span></div>
<div class="t m" style="left:867px;top:151px;color:#000;">ECX   <span style="color:#ff0000;">770EABE0</span>     &lt;ntdll.DbgUiRemoteBreakin&gt;</div>
<div class="t m" style="left:867px;top:163px;color:#000;">EDX   <span style="color:#ff0000;">770EABE0</span>     &lt;ntdll.DbgUiRemoteBreakin&gt;</div>
<div class="t m" style="left:867px;top:175px;color:#000;">EBP   <span style="color:#ff0000;">15E8FB10</span></div>
<div class="t m" style="left:867px;top:187px;color:#000;">ESP   <span style="color:#ff0000;">15E8FAE4</span></div>
<div class="t m" style="left:867px;top:199px;color:#000;">ESI   <span style="color:#ff0000;">770EABE0</span>     &lt;ntdll.DbgUiRemoteBreakin&gt;</div>
<div class="t m" style="left:867px;top:211px;color:#000;">EDI   <span style="color:#ff0000;">770EABE0</span>     &lt;ntdll.DbgUiRemoteBreakin&gt;</div>
<div class="t m" style="left:867px;top:235px;color:#000;">EIP   <span style="color:#ff0000;">770B4061</span>     ntdll.770B4061</div>
<div class="t m" style="left:867px;top:259px;color:#000;">EFLAGS   <span style="color:#ff0000;">00000246</span></div>
<div class="t m" style="left:867px;top:271px;color:#000;">ZF <span style="color:#ff0000;">1</span>  PF <span style="color:#ff0000;">1</span>  AF 0</div>
<div class="t m" style="left:867px;top:283px;color:#000;">OF 0  SF 0  DF 0</div>
<div class="t m" style="left:867px;top:295px;color:#000;">CF 0  TF 0  IF 1</div>
<div class="t m" style="left:867px;top:319px;color:#000;">LastError  <span style="color:#ff0000;">00000000 (ERROR_SUCCESS)</span></div>
<div class="t m" style="left:867px;top:331px;color:#000;">LastStatus <span style="color:#ff0000;">00000000 (STATUS_SUCCESS)</span></div>
<div class="t m" style="left:867px;top:355px;color:#000;">GS 002B  FS 0053</div>
<div style="position:absolute;left:1187px;top:121px;width:9px;height:246px;background:#f0f0f0;border:1px solid #fff;"></div>
<div style="position:absolute;left:1188px;top:122px;width:7px;height:52px;background:#a6a6a6;border:1px solid #c8c8c8;"></div>
<div style="position:absolute;left:860px;top:367px;width:327px;height:9px;background:#f0f0f0;border-top:1px solid #a0a0a0;"></div>
<div style="position:absolute;left:861px;top:368px;width:104px;height:6px;background:#a6a6a6;"></div>
<div style="position:absolute;left:860px;top:378px;width:227px;height:19px;background:#e5e5e5;border:1px solid #adadad;"></div>
<div class="t ui" style="left:862px;top:380px;color:#000;"><span class="cj" style="width:24px">默认</span><span class="as" style="width:60px"><span class="asi"> (stdcall)</span></span></div>
<svg style="left:1074px;top:385px" width="8" height="5" viewBox="0 0 8 5"><path d="M0 0 H8 L4 5z" fill="#000"/></svg>
<div style="position:absolute;left:1090px;top:378px;width:38px;height:18px;background:#fff;border:1px solid #8a8a8a;"></div>
<div class="t" style="left:1092px;top:381px;font-size:11px;line-height:12px;color:#000">5</div>
<div style="position:absolute;left:1112px;top:380px;width:14px;height:7px;background:#e5e5e5;border:1px solid #d4d4d4;"></div>
<div style="position:absolute;left:1112px;top:387px;width:14px;height:7px;background:#e5e5e5;border:1px solid #d4d4d4;"></div>
<svg style="left:1115px;top:382px" width="8" height="11" viewBox="0 0 8 11"><path d="M0.5 3.5 L4 0.3 L7.5 3.5z M0.5 7.5 L4 10.7 L7.5 7.5z" fill="#000"/></svg>
<div style="position:absolute;left:1131px;top:380px;width:13px;height:13px;background:#fff;border:1px solid #333;"></div>
<div class="t ui" style="left:1148px;top:381px;color:#000;"><span class="cj" style="width:24px">解锁</span></div>
<div style="position:absolute;left:859px;top:397px;width:338px;height:58px;background:#fff8f0;border:1px solid #a0a0a0;"></div>
<div style="position:absolute;left:860px;top:398px;width:327px;height:11px;background:#c0c0c0;"></div>
<div style="position:absolute;left:860px;top:398px;width:327px;height:56px;overflow:hidden">
<div class="t m" style="left:4px;top:1px;color:#000;">1: [esp+4] 96A59BB3</div>
<div class="t m" style="left:4px;top:12px;color:#000;">2: [esp+8] 770EABE0 &lt;ntdll.DbgUiRemoteBreakin&gt;</div>
<div class="t m" style="left:4px;top:23px;color:#000;">3: [esp+C] 770EABE0 &lt;ntdll.DbgUiRemoteBreakin&gt;</div>
<div class="t m" style="left:4px;top:34px;color:#000;">4: [esp+10] 00000000</div>
<div class="t m" style="left:4px;top:45px;color:#000;">5: [esp+14] 15E8FAE8</div>
</div>
<div style="position:absolute;left:1187px;top:398px;width:9px;height:56px;background:#f0f0f0;"></div>
<div style="position:absolute;left:1187px;top:398px;width:9px;height:55px;background:#a6a6a6;border:1px solid #c8c8c8;"></div>
<div style="position:absolute;left:1px;top:405px;width:857px;height:50px;background:#fff8f0;border:1px solid #a0a0a0;"></div>
<div class="t" style="left:6px;top:404px;font-size:11px;line-height:14px"><span style="display:inline-block;width:66px;overflow:hidden;vertical-align:top;">跳转将要执行</span></div>
<div class="t m" style="left:6px;top:418px;color:#000;">im.5D8F73E9</div>
<div class="t m" style="left:6px;top:440px;color:#000;">.text:5D8F73DE im.dll:$573DE #567DE</div>
<div style="position:absolute;left:1px;top:456px;width:81px;height:25px;background:#fff;"></div>
<div style="position:absolute;left:82px;top:458px;width:568px;height:1px;background:#dcdcdc;"></div>
<div style="position:absolute;left:82px;top:456px;width:1px;height:24px;background:#d9d9d9;"></div>
<div style="position:absolute;left:160px;top:456px;width:1px;height:24px;background:#d9d9d9;"></div>
<div style="position:absolute;left:240px;top:456px;width:1px;height:24px;background:#d9d9d9;"></div>
<div style="position:absolute;left:320px;top:456px;width:1px;height:24px;background:#d9d9d9;"></div>
<div style="position:absolute;left:400px;top:456px;width:1px;height:24px;background:#d9d9d9;"></div>
<div style="position:absolute;left:480px;top:456px;width:1px;height:24px;background:#d9d9d9;"></div>
<div style="position:absolute;left:572px;top:456px;width:1px;height:24px;background:#d9d9d9;"></div>
<div style="position:absolute;left:650px;top:456px;width:1px;height:24px;background:#d9d9d9;"></div>
<svg style="left:13px;top:461px" width="16" height="15" viewBox="0 0 16 15"><rect x="3" y="1" width="13" height="10" rx="1" fill="#e8e8e8" stroke="#888"/><path d="M6 2v8M9 2v8M12 2v8" stroke="#aaa"/><rect x="0" y="4" width="4" height="7" fill="#f0c020" stroke="#a08010" stroke-width="0.6"/><circle cx="3.5" cy="12.5" r="1.8" fill="#444"/><circle cx="12.5" cy="12.5" r="1.8" fill="#444"/></svg>
<div class="t ui" style="left:33px;top:462px;color:#000;"><span class="cj" style="width:24px">内存</span><span class="as" style="width:12px"><span class="asi"> 1</span></span></div>
<svg style="left:93px;top:461px" width="16" height="15" viewBox="0 0 16 15"><rect x="3" y="1" width="13" height="10" rx="1" fill="#e8e8e8" stroke="#888"/><path d="M6 2v8M9 2v8M12 2v8" stroke="#aaa"/><rect x="0" y="4" width="4" height="7" fill="#f0c020" stroke="#a08010" stroke-width="0.6"/><circle cx="3.5" cy="12.5" r="1.8" fill="#444"/><circle cx="12.5" cy="12.5" r="1.8" fill="#444"/></svg>
<div class="t ui" style="left:113px;top:462px;color:#000;"><span class="cj" style="width:24px">内存</span><span class="as" style="width:12px"><span class="asi"> 2</span></span></div>
<svg style="left:173px;top:461px" width="16" height="15" viewBox="0 0 16 15"><rect x="3" y="1" width="13" height="10" rx="1" fill="#e8e8e8" stroke="#888"/><path d="M6 2v8M9 2v8M12 2v8" stroke="#aaa"/><rect x="0" y="4" width="4" height="7" fill="#f0c020" stroke="#a08010" stroke-width="0.6"/><circle cx="3.5" cy="12.5" r="1.8" fill="#444"/><circle cx="12.5" cy="12.5" r="1.8" fill="#444"/></svg>
<div class="t ui" style="left:193px;top:462px;color:#000;"><span class="cj" style="width:24px">内存</span><span class="as" style="width:12px"><span class="asi"> 3</span></span></div>
<svg style="left:253px;top:461px" width="16" height="15" viewBox="0 0 16 15"><rect x="3" y="1" width="13" height="10" rx="1" fill="#e8e8e8" stroke="#888"/><path d="M6 2v8M9 2v8M12 2v8" stroke="#aaa"/><rect x="0" y="4" width="4" height="7" fill="#f0c020" stroke="#a08010" stroke-width="0.6"/><circle cx="3.5" cy="12.5" r="1.8" fill="#444"/><circle cx="12.5" cy="12.5" r="1.8" fill="#444"/></svg>
<div class="t ui" style="left:273px;top:462px;color:#000;"><span class="cj" style="width:24px">内存</span><span class="as" style="width:12px"><span class="asi"> 4</span></span></div>
<svg style="left:333px;top:461px" width="16" height="15" viewBox="0 0 16 15"><rect x="3" y="1" width="13" height="10" rx="1" fill="#e8e8e8" stroke="#888"/><path d="M6 2v8M9 2v8M12 2v8" stroke="#aaa"/><rect x="0" y="4" width="4" height="7" fill="#f0c020" stroke="#a08010" stroke-width="0.6"/><circle cx="3.5" cy="12.5" r="1.8" fill="#444"/><circle cx="12.5" cy="12.5" r="1.8" fill="#444"/></svg>
<div class="t ui" style="left:353px;top:462px;color:#000;"><span class="cj" style="width:24px">内存</span><span class="as" style="width:12px"><span class="asi"> 5</span></span></div>
<svg style="left:413px;top:460px" width="16" height="16" viewBox="0 0 16 16"><path d="M1.5 9 L2 0.5 L6.5 4 h3 L14 0.5 L14.5 9 Q14 15.5 8 15.5 Q2 15.5 1.5 9z" fill="#d8964a" stroke="#a86a30" stroke-width="0.6"/><ellipse cx="8" cy="11.5" rx="3.8" ry="3.2" fill="#f8e4c8"/><circle cx="5.3" cy="8" r="1.1" fill="#222"/><circle cx="10.7" cy="8" r="1.1" fill="#222"/><ellipse cx="8" cy="11.3" rx="1.4" ry="1" fill="#333"/></svg>
<div class="t ui" style="left:433px;top:462px;color:#000;"><span class="cj" style="width:24px">监视</span><span class="as" style="width:12px"><span class="asi"> 1</span></span></div>
<div class="t" style="left:492px;top:463px;font-family:'Liberation Serif',serif;font-size:11px;line-height:12px;color:#333">[<i style="color:#8b2020">x</i>=]</div>
<div class="t ui" style="left:513px;top:462px;color:#000;"><span class="cj" style="width:48px">局部变量</span></div>
<svg style="left:588px;top:459px" width="14" height="17" viewBox="0 0 14 17"><path d="M5 16 L10 5 a3 3 0 0 0 -5 -2" fill="none" stroke="#e04040" stroke-width="3"/><path d="M5 16 L10 5 a3 3 0 0 0 -5 -2" fill="none" stroke="#fff" stroke-width="1.2" stroke-dasharray="1.5,2"/></svg>
<div class="t ui" style="left:605px;top:462px;color:#000;"><span class="cj" style="width:36px">结构体</span></div>
<div style="position:absolute;left:1px;top:480px;width:724px;height:128px;background:#fff8f0;border:1px solid #a0a0a0;"></div>
<div style="position:absolute;left:2px;top:481px;width:705px;height:15px;background:#c0c0c0;border-bottom:2px solid #8a8a8a;"></div>
<div style="position:absolute;left:65px;top:482px;width:1px;height:13px;background:#888;"></div>
<div style="position:absolute;left:402px;top:482px;width:1px;height:13px;background:#888;"></div>
<div style="position:absolute;left:522px;top:482px;width:1px;height:13px;background:#888;"></div>
<div style="position:absolute;left:705px;top:482px;width:1px;height:13px;background:#888;"></div>
<div class="t" style="left:6px;top:481px;font-size:11px;line-height:14px"><span style="display:inline-block;width:22px;overflow:hidden;vertical-align:top;">地址</span></div>
<div class="t" style="left:70px;top:481px;font-size:11px;line-height:14px"><span style="display:inline-block;width:44px;overflow:hidden;vertical-align:top;">十六进制</span></div>
<div class="t m" style="left:407px;top:484px;color:#000;">ASCII</div>
<div style="position:absolute;left:65px;top:495px;width:1px;height:112px;background:#808080;"></div>
<div style="position:absolute;left:150px;top:495px;width:1px;height:112px;background:#808080;"></div>
<div style="position:absolute;left:234px;top:495px;width:1px;height:112px;background:#808080;"></div>
<div style="position:absolute;left:318px;top:495px;width:1px;height:112px;background:#808080;"></div>
<div style="position:absolute;left:402px;top:495px;width:1px;height:112px;background:#808080;"></div>
<div style="position:absolute;left:522px;top:495px;width:1px;height:112px;background:#808080;"></div>
<div style="position:absolute;left:66px;top:496px;width:21px;height:11px;background:#c0c0c0;"></div>
<div style="position:absolute;left:2px;top:496px;width:705px;height:111px;overflow:hidden">
<div class="t m" style="left:4px;top:1px;color:#000;">77041000</div>
<div class="t m" style="left:68px;top:1px;color:#000;"><span style="color:#000;">16</span> <span style="color:#008000;">00</span> <span style="color:#000;">18</span> <span style="color:#008000;">00</span></div>
<div class="t m" style="left:152px;top:1px;color:#000;"><span style="color:#000;">C0</span> <span style="color:#000;">8B</span> <span style="color:#000;">04</span> <span style="color:#800080;">77</span></div>
<div style="position:absolute;left:152px;top:9px;width:77px;height:2px;background:#ff0000;"></div>
<div class="t m" style="left:236px;top:1px;color:#000;"><span style="color:#000;">14</span> <span style="color:#008000;">00</span> <span style="color:#000;">16</span> <span style="color:#008000;">00</span></div>
<div class="t m" style="left:320px;top:1px;color:#000;"><span style="color:#800080;">38</span> <span style="color:#000;">84</span> <span style="color:#000;">04</span> <span style="color:#800080;">77</span></div>
<div style="position:absolute;left:320px;top:9px;width:77px;height:2px;background:#ff0000;"></div>
<div class="t m" style="left:405px;top:1px;color:#000;"><span style="color:#000;background:#c0c0c0;display:inline-block;height:10px;vertical-align:top;margin-top:-1px;padding-top:1px;">.</span><span style="color:#008000;">.</span><span style="color:#000;">.</span><span style="color:#008000;">.</span><span style="color:#000;">À</span><span style="color:#000;">.</span><span style="color:#000;">.</span><span style="color:#800080;">w</span><span style="color:#000;">.</span><span style="color:#008000;">.</span><span style="color:#000;">.</span><span style="color:#008000;">.</span><span style="color:#800080;">8</span><span style="color:#000;">.</span><span style="color:#000;">.</span><span style="color:#800080;">w</span></div>
<div class="t m" style="left:4px;top:12px;color:#000;">77041010</div>
<div class="t m" style="left:68px;top:12px;color:#000;"><span style="color:#008000;">00</span> <span style="color:#008000;">00</span> <span style="color:#000;">02</span> <span style="color:#008000;">00</span></div>
<div class="t m" style="left:152px;top:12px;color:#000;"><span style="color:#000;">80</span> <span style="color:#800080;">5B</span> <span style="color:#000;">04</span> <span style="color:#800080;">77</span></div>
<div style="position:absolute;left:152px;top:20px;width:77px;height:2px;background:#ff0000;"></div>
<div class="t m" style="left:236px;top:12px;color:#000;"><span style="color:#000;">0E</span> <span style="color:#008000;">00</span> <span style="color:#000;">10</span> <span style="color:#008000;">00</span></div>
<div class="t m" style="left:320px;top:12px;color:#000;"><span style="color:#000;">E0</span> <span style="color:#000;">8D</span> <span style="color:#000;">04</span> <span style="color:#800080;">77</span></div>
<div style="position:absolute;left:320px;top:20px;width:77px;height:2px;background:#ff0000;"></div>
<div class="t m" style="left:405px;top:12px;color:#000;"><span style="color:#008000;">.</span><span style="color:#008000;">.</span><span style="color:#000;">.</span><span style="color:#008000;">.</span><span style="color:#000;">.</span><span style="color:#800080;">[</span><span style="color:#000;">.</span><span style="color:#800080;">w</span><span style="color:#000;">.</span><span style="color:#008000;">.</span><span style="color:#000;">.</span><span style="color:#008000;">.</span><span style="color:#000;">à</span><span style="color:#000;">.</span><span style="color:#000;">.</span><span style="color:#800080;">w</span></div>
<div class="t m" style="left:4px;top:23px;color:#000;">77041020</div>
<div class="t m" style="left:68px;top:23px;color:#000;"><span style="color:#800080;">0C</span> <span style="color:#008000;">00</span> <span style="color:#000;">0E</span> <span style="color:#008000;">00</span></div>
<div class="t m" style="left:152px;top:23px;color:#000;"><span style="color:#000;">D0</span> <span style="color:#000;">8D</span> <span style="color:#000;">04</span> <span style="color:#800080;">77</span></div>
<div style="position:absolute;left:152px;top:31px;width:77px;height:2px;background:#ff0000;"></div>
<div class="t m" style="left:236px;top:23px;color:#000;"><span style="color:#000;">06</span> <span style="color:#008000;">00</span> <span style="color:#000;">08</span> <span style="color:#008000;">00</span></div>
<div class="t m" style="left:320px;top:23px;color:#000;"><span style="color:#000;">B0</span> <span style="color:#000;">8D</span> <span style="color:#000;">04</span> <span style="color:#800080;">77</span></div>
<div style="position:absolute;left:320px;top:31px;width:77px;height:2px;background:#ff0000;"></div>
<div class="t m" style="left:405px;top:23px;color:#000;"><span style="color:#800080;">.</span><span style="color:#008000;">.</span><span style="color:#000;">.</span><span style="color:#008000;">.</span><span style="color:#000;">Ð</span><span style="color:#000;">.</span><span style="color:#000;">.</span><span style="color:#800080;">w</span><span style="color:#000;">.</span><span style="color:#008000;">.</span><span style="color:#000;">.</span><span style="color:#008000;">.</span><span style="color:#000;">°</span><span style="color:#000;">.</span><span style="color:#000;">.</span><span style="color:#800080;">w</span></div>
<div class="t m" style="left:4px;top:34px;color:#000;">77041030</div>
<div class="t m" style="left:68px;top:34px;color:#000;"><span style="color:#000;">06</span> <span style="color:#008000;">00</span> <span style="color:#000;">08</span> <span style="color:#008000;">00</span></div>
<div class="t m" style="left:152px;top:34px;color:#000;"><span style="color:#000;">C0</span> <span style="color:#000;">8D</span> <span style="color:#000;">04</span> <span style="color:#800080;">77</span></div>
<div style="position:absolute;left:152px;top:42px;width:77px;height:2px;background:#ff0000;"></div>
<div class="t m" style="left:236px;top:34px;color:#000;"><span style="color:#000;">06</span> <span style="color:#008000;">00</span> <span style="color:#000;">08</span> <span style="color:#008000;">00</span></div>
<div class="t m" style="left:320px;top:34px;color:#000;"><span style="color:#000;">B8</span> <span style="color:#000;">8D</span> <span style="color:#000;">04</span> <span style="color:#800080;">77</span></div>
<div style="position:absolute;left:320px;top:42px;width:77px;height:2px;background:#ff0000;"></div>
<div class="t m" style="left:405px;top:34px;color:#000;"><span style="color:#000;">.</span><span style="color:#008000;">.</span><span style="color:#000;">.</span><span style="color:#008000;">.</span><span style="color:#000;">À</span><span style="color:#000;">.</span><span style="color:#000;">.</span><span style="color:#800080;">w</span><span style="color:#000;">.</span><span style="color:#008000;">.</span><span style="color:#000;">.</span><span style="color:#008000;">.</span><span style="color:#000;">¸</span><span style="color:#000;">.</span><span style="color:#000;">.</span><span style="color:#800080;">w</span></div>
<div class="t m" style="left:4px;top:45px;color:#000;">77041040</div>
<div class="t m" style="left:68px;top:45px;color:#000;"><span style="color:#000;">06</span> <span style="color:#008000;">00</span> <span style="color:#000;">08</span> <span style="color:#008000;">00</span></div>
<div class="t m" style="left:152px;top:45px;color:#000;"><span style="color:#000;">C8</span> <span style="color:#000;">8D</span> <span style="color:#000;">04</span> <span style="color:#800080;">77</span></div>
<div style="position:absolute;left:152px;top:53px;width:77px;height:2px;background:#ff0000;"></div>
<div class="t m" style="left:236px;top:45px;color:#000;"><span style="color:#000;">08</span> <span style="color:#008000;">00</span> <span style="color:#800080;">0A</span> <span style="color:#008000;">00</span></div>
<div class="t m" style="left:320px;top:45px;color:#000;"><span style="color:#800080;">70</span> <span style="color:#000;">83</span> <span style="color:#000;">04</span> <span style="color:#800080;">77</span></div>
<div style="position:absolute;left:320px;top:53px;width:77px;height:2px;background:#ff0000;"></div>
<div class="t m" style="left:405px;top:45px;color:#000;"><span style="color:#000;">.</span><span style="color:#008000;">.</span><span style="color:#000;">.</span><span style="color:#008000;">.</span><span style="color:#000;">È</span><span style="color:#000;">.</span><span style="color:#000;">.</span><span style="color:#800080;">w</span><span style="color:#000;">.</span><span style="color:#008000;">.</span><span style="color:#800080;">.</span><span style="color:#008000;">.</span><span style="color:#800080;">p</span><span style="color:#000;">.</span><span style="color:#000;">.</span><span style="color:#800080;">w</span></div>
<div class="t m" style="left:4px;top:56px;color:#000;">77041050</div>
<div class="t m" style="left:68px;top:56px;color:#000;"><span style="color:#000;">1C</span> <span style="color:#008000;">00</span> <span style="color:#000;">1E</span> <span style="color:#008000;">00</span></div>
<div class="t m" style="left:152px;top:56px;color:#000;"><span style="color:#800080;">6C</span> <span style="color:#000;">84</span> <span style="color:#000;">04</span> <span style="color:#800080;">77</span></div>
<div style="position:absolute;left:152px;top:64px;width:77px;height:2px;background:#ff0000;"></div>
<div class="t m" style="left:236px;top:56px;color:#000;"><span style="color:#800080;">2A</span> <span style="color:#008000;">00</span> <span style="color:#800080;">2C</span> <span style="color:#008000;">00</span></div>
<div class="t m" style="left:320px;top:56px;color:#000;"><span style="color:#000;">C4</span> <span style="color:#000;">8C</span> <span style="color:#000;">04</span> <span style="color:#800080;">77</span></div>
<div style="position:absolute;left:320px;top:64px;width:77px;height:2px;background:#ff0000;"></div>
<div class="t m" style="left:405px;top:56px;color:#000;"><span style="color:#000;">.</span><span style="color:#008000;">.</span><span style="color:#000;">.</span><span style="color:#008000;">.</span><span style="color:#800080;">l</span><span style="color:#000;">.</span><span style="color:#000;">.</span><span style="color:#800080;">w</span><span style="color:#800080;">*</span><span style="color:#008000;">.</span><span style="color:#800080;">,</span><span style="color:#008000;">.</span><span style="color:#000;">Ä</span><span style="color:#000;">.</span><span style="color:#000;">.</span><span style="color:#800080;">w</span></div>
<div class="t m" style="left:4px;top:67px;color:#000;">77041060</div>
<div class="t m" style="left:68px;top:67px;color:#000;"><span style="color:#000;">08</span> <span style="color:#008000;">00</span> <span style="color:#800080;">0A</span> <span style="color:#008000;">00</span></div>
<div class="t m" style="left:152px;top:67px;color:#000;"><span style="color:#000;">D8</span> <span style="color:#000;">8B</span> <span style="color:#000;">04</span> <span style="color:#800080;">77</span></div>
<div style="position:absolute;left:152px;top:75px;width:77px;height:2px;background:#ff0000;"></div>
<div class="t m" style="left:236px;top:67px;color:#000;"><span style="color:#000;">02</span> <span style="color:#008000;">00</span> <span style="color:#000;">04</span> <span style="color:#008000;">00</span></div>
<div class="t m" style="left:320px;top:67px;color:#000;"><span style="color:#000;">98</span> <span style="color:#000;">8D</span> <span style="color:#000;">04</span> <span style="color:#800080;">77</span></div>
<div style="position:absolute;left:320px;top:75px;width:77px;height:2px;background:#ff0000;"></div>
<div class="t m" style="left:405px;top:67px;color:#000;"><span style="color:#000;">.</span><span style="color:#008000;">.</span><span style="color:#800080;">.</span><span style="color:#008000;">.</span><span style="color:#000;">Ø</span><span style="color:#000;">.</span><span style="color:#000;">.</span><span style="color:#800080;">w</span><span style="color:#000;">.</span><span style="color:#008000;">.</span><span style="color:#000;">.</span><span style="color:#008000;">.</span><span style="color:#000;">.</span><span style="color:#000;">.</span><span style="color:#000;">.</span><span style="color:#800080;">w</span></div>
<div class="t m" style="left:4px;top:78px;color:#000;">77041070</div>
<div class="t m" style="left:68px;top:78px;color:#000;"><span style="color:#000;">08</span> <span style="color:#008000;">00</span> <span style="color:#800080;">0A</span> <span style="color:#008000;">00</span></div>
<div class="t m" style="left:152px;top:78px;color:#000;"><span style="color:#000;">A4</span> <span style="color:#000;">D7</span> <span style="color:#000;">04</span> <span style="color:#800080;">77</span></div>
<div style="position:absolute;left:152px;top:86px;width:77px;height:2px;background:#ff0000;"></div>
<div class="t m" style="left:236px;top:78px;color:#000;"><span style="color:#000;">18</span> <span style="color:#008000;">00</span> <span style="color:#000;">1A</span> <span style="color:#008000;">00</span></div>
<div class="t m" style="left:320px;top:78px;color:#000;"><span style="color:#800080;">50</span> <span style="color:#000;">84</span> <span style="color:#000;">04</span> <span style="color:#800080;">77</span></div>
<div style="position:absolute;left:320px;top:86px;width:77px;height:2px;background:#ff0000;"></div>
<div class="t m" style="left:405px;top:78px;color:#000;"><span style="color:#000;">.</span><span style="color:#008000;">.</span><span style="color:#800080;">.</span><span style="color:#008000;">.</span><span style="color:#000;">¤</span><span style="color:#000;">×</span><span style="color:#000;">.</span><span style="color:#800080;">w</span><span style="color:#000;">.</span><span style="color:#008000;">.</span><span style="color:#000;">.</span><span style="color:#008000;">.</span><span style="color:#800080;">P</span><span style="color:#000;">.</span><span style="color:#000;">.</span><span style="color:#800080;">w</span></div>
<div class="t m" style="left:4px;top:89px;color:#000;">77041080</div>
<div class="t m" style="left:68px;top:89px;color:#000;"><span style="color:#000;">1C</span> <span style="color:#008000;">00</span> <span style="color:#000;">1E</span> <span style="color:#008000;">00</span></div>
<div class="t m" style="left:152px;top:89px;color:#000;"><span style="color:#800080;">70</span> <span style="color:#000;">D9</span> <span style="color:#000;">04</span> <span style="color:#800080;">77</span></div>
<div style="position:absolute;left:152px;top:97px;width:77px;height:2px;background:#ff0000;"></div>
<div class="t m" style="left:236px;top:89px;color:#000;"><span style="color:#800080;">28</span> <span style="color:#008000;">00</span> <span style="color:#800080;">2A</span> <span style="color:#008000;">00</span></div>
<div class="t m" style="left:320px;top:89px;color:#000;"><span style="color:#800080;">44</span> <span style="color:#000;">D9</span> <span style="color:#000;">04</span> <span style="color:#800080;">77</span></div>
<div style="position:absolute;left:320px;top:97px;width:77px;height:2px;background:#ff0000;"></div>
<div class="t m" style="left:405px;top:89px;color:#000;"><span style="color:#000;">.</span><span style="color:#008000;">.</span><span style="color:#000;">.</span><span style="color:#008000;">.</span><span style="color:#800080;">p</span><span style="color:#000;">Ù</span><span style="color:#000;">.</span><span style="color:#800080;">w</span><span style="color:#800080;">(</span><span style="color:#008000;">.</span><span style="color:#800080;">*</span><span style="color:#008000;">.</span><span style="color:#800080;">D</span><span style="color:#000;">Ù</span><span style="color:#000;">.</span><span style="color:#800080;">w</span></div>
<div class="t m" style="left:4px;top:100px;color:#000;">77041090</div>
<div class="t m" style="left:68px;top:100px;color:#000;"><span style="color:#800080;">34</span> <span style="color:#008000;">00</span> <span style="color:#800080;">36</span> <span style="color:#008000;">00</span></div>
<div class="t m" style="left:152px;top:100px;color:#000;"><span style="color:#800080;">0C</span> <span style="color:#000;">D9</span> <span style="color:#000;">04</span> <span style="color:#800080;">77</span></div>
<div style="position:absolute;left:152px;top:108px;width:77px;height:2px;background:#ff0000;"></div>
<div class="t m" style="left:236px;top:100px;color:#000;"><span style="color:#000;">1E</span> <span style="color:#008000;">00</span> <span style="color:#800080;">20</span> <span style="color:#008000;">00</span></div>
<div class="t m" style="left:320px;top:100px;color:#000;"><span style="color:#000;">EC</span> <span style="color:#000;">D8</span> <span style="color:#000;">04</span> <span style="color:#800080;">77</span></div>
<div style="position:absolute;left:320px;top:108px;width:77px;height:2px;background:#ff0000;"></div>
<div class="t m" style="left:405px;top:100px;color:#000;"><span style="color:#800080;">4</span><span style="color:#008000;">.</span><span style="color:#800080;">6</span><span style="color:#008000;">.</span><span style="color:#800080;">.</span><span style="color:#000;">Ù</span><span style="color:#000;">.</span><span style="color:#800080;">w</span><span style="color:#000;">.</span><span style="color:#008000;">.</span><span style="color:#800080;"> </span><span style="color:#008000;">.</span><span style="color:#000;">ì</span><span style="color:#000;">Ø</span><span style="color:#000;">.</span><span style="color:#800080;">w</span></div>
</div>
<div style="position:absolute;left:707px;top:481px;width:17px;height:126px;background:#f0f0f0;"></div>
<div style="position:absolute;left:708px;top:498px;width:15px;height:18px;background:#cdcdcd;"></div>
<svg style="left:711.5px;top:487.5px" width="8" height="5" viewBox="0 0 8 5"><path d="M0.8 4.5 L4 1.3 L7.2 4.5" fill="none" stroke="#606060" stroke-width="1.8"/></svg>
<svg style="left:711.5px;top:595.0px" width="8" height="5" viewBox="0 0 8 5"><path d="M0.8 0.5 L4 3.7 L7.2 0.5" fill="none" stroke="#606060" stroke-width="1.8"/></svg>
<div style="position:absolute;left:726px;top:456px;width:471px;height:152px;background:#fff8f0;border:1px solid #a0a0a0;"></div>
<div style="position:absolute;left:727px;top:457px;width:63px;height:11px;background:#000;"></div>
<div style="position:absolute;left:790px;top:457px;width:389px;height:11px;background:#c0c0c0;"></div>
<div style="position:absolute;left:790px;top:457px;width:1px;height:133px;background:#808080;"></div>
<div style="position:absolute;left:856px;top:457px;width:1px;height:133px;background:#808080;"></div>
<div style="position:absolute;left:727px;top:457px;width:452px;height:133px;overflow:hidden">
<div class="t m" style="left:4px;top:1px;color:#fff;">15E8FAE4</div>
<div class="t m" style="left:68px;top:1px;color:#000;">770EAC19</div>
<div class="t m" style="left:134px;top:1px;color:#ff0000;"><span class="cj" style="width:33px;font-size:11px;line-height:11px">返回到</span><span style="display:inline-block;vertical-align:top"> ntdll.770EAC19 </span><span class="cj" style="width:11px;font-size:11px;line-height:11px">自</span><span style="display:inline-block;vertical-align:top"> ntdll.770B4060</span></div>
<div class="t m" style="left:4px;top:12px;color:#808080;">15E8FAE8</div>
<div class="t m" style="left:68px;top:12px;color:#000;">96A59BB3</div>
<div class="t m" style="left:4px;top:23px;color:#808080;">15E8FAEC</div>
<div class="t m" style="left:68px;top:23px;color:#000;">770EABE0</div>
<div class="t m" style="left:134px;top:23px;color:#000;"><span style="display:inline-block;vertical-align:top">ntdll.770EABE0</span></div>
<div class="t m" style="left:4px;top:34px;color:#808080;">15E8FAF0</div>
<div class="t m" style="left:68px;top:34px;color:#000;">770EABE0</div>
<div class="t m" style="left:134px;top:34px;color:#000;"><span style="display:inline-block;vertical-align:top">ntdll.770EABE0</span></div>
<div class="t m" style="left:4px;top:45px;color:#808080;">15E8FAF4</div>
<div class="t m" style="left:68px;top:45px;color:#000;">00000000</div>
<div class="t m" style="left:4px;top:56px;color:#808080;">15E8FAF8</div>
<div class="t m" style="left:68px;top:56px;color:#000;">15E8FAE8</div>
<div class="t m" style="left:4px;top:67px;color:#808080;">15E8FAFC</div>
<div class="t m" style="left:68px;top:67px;color:#000;">00000000</div>
<div class="t m" style="left:4px;top:78px;color:#808080;">15E8FB00</div>
<div class="t m" style="left:68px;top:78px;color:#000;">15E8FB6C</div>
<div class="t m" style="left:134px;top:78px;color:#ae81ff;"><span class="cj" style="width:22px;font-size:11px;line-height:11px">指向</span><span style="display:inline-block;vertical-align:top">SEH_Record[1]</span><span class="cj" style="width:33px;font-size:11px;line-height:11px">的指针</span></div>
<div class="t m" style="left:4px;top:89px;color:#808080;">15E8FB04</div>
<div class="t m" style="left:68px;top:89px;color:#000;">770B9F80</div>
<div class="t m" style="left:134px;top:89px;color:#000;"><span style="display:inline-block;vertical-align:top">ntdll.770B9F80</span></div>
<div class="t m" style="left:4px;top:100px;color:#808080;">15E8FB08</div>
<div class="t m" style="left:68px;top:100px;color:#000;">F45905E3</div>
<div class="t m" style="left:4px;top:111px;color:#808080;">15E8FB0C</div>
<div class="t m" style="left:68px;top:111px;color:#000;">00000000</div>
<div class="t m" style="left:4px;top:122px;color:#808080;">15E8FB10</div>
<div class="t m" style="left:68px;top:122px;color:#000;">15E8FB20</div>
<div class="t m" style="left:4px;top:133px;color:#808080;">15E8FB14</div>
<div class="t m" style="left:68px;top:133px;color:#000;">770A8F9A</div>
<div class="t m" style="left:134px;top:133px;color:#ff0000;"><span class="cj" style="width:33px;font-size:11px;line-height:11px">返回到</span><span style="display:inline-block;vertical-align:top"> ntdll.770A8F9A </span><span class="cj" style="width:11px;font-size:11px;line-height:11px">自</span><span style="display:inline-block;vertical-align:top"> ntdll.770B4040</span></div>
</div>
<div style="position:absolute;left:1179px;top:457px;width:17px;height:133px;background:#f0f0f0;"></div>
<div style="position:absolute;left:1180px;top:551px;width:15px;height:18px;background:#cdcdcd;"></div>
<svg style="left:1183.5px;top:463.5px" width="8" height="5" viewBox="0 0 8 5"><path d="M0.8 4.5 L4 1.3 L7.2 4.5" fill="none" stroke="#606060" stroke-width="1.8"/></svg>
<svg style="left:1183.5px;top:578.0px" width="8" height="5" viewBox="0 0 8 5"><path d="M0.8 0.5 L4 3.7 L7.2 0.5" fill="none" stroke="#606060" stroke-width="1.8"/></svg>
<div style="position:absolute;left:727px;top:590px;width:452px;height:17px;background:#f0f0f0;"></div>
<div style="position:absolute;left:744px;top:591px;width:116px;height:15px;background:#cdcdcd;"></div>
<svg style="left:732.5px;top:594.5px" width="5" height="8" viewBox="0 0 5 8"><path d="M4.5 0.8 L1.3 4 L4.5 7.2" fill="none" stroke="#606060" stroke-width="1.8"/></svg>
<svg style="left:1167.5px;top:594.5px" width="5" height="8" viewBox="0 0 5 8"><path d="M0.5 0.8 L3.7 4 L0.5 7.2" fill="none" stroke="#606060" stroke-width="1.8"/></svg>
<div style="position:absolute;left:1179px;top:590px;width:17px;height:17px;background:#f0f0f0;"></div>
<div class="t ui" style="left:3px;top:613px;color:#000;"><span class="cj" style="width:24px">命令</span><span class="as" style="width:6px"><span class="asi">:</span></span></div>
<div style="position:absolute;left:39px;top:610px;width:1087px;height:20px;background:#fff;border:1px solid #7a7a7a;"></div>
<div style="position:absolute;left:1126px;top:610px;width:69px;height:20px;background:#e1e1e1;border:1px solid #adadad;"></div>
<div class="t ui" style="left:1130px;top:613px;color:#000;"><span class="cj" style="width:24px">默认</span></div>
<svg style="left:1182px;top:618px" width="8" height="5" viewBox="0 0 8 5"><path d="M0 0 H8 L4 5z" fill="#000"/></svg>
<div style="position:absolute;left:0px;top:632px;width:1198px;height:23px;background:#c0c0c0;border-top:1px solid #a0a0a0;"></div>
<div style="position:absolute;left:3px;top:635px;width:58px;height:17px;background:#ffff00;"></div>
<div class="t ui" style="left:14px;top:636px;color:#ff0000;"><span class="cj" style="width:36px">已暂停</span></div>
<div style="position:absolute;left:66px;top:635px;width:980px;height:17px;border-top:1px solid #9a9a9a;border-left:1px solid #9a9a9a;"></div>
<div class="t ui" style="left:71px;top:636px;color:#000;"><span class="cj" style="width:72px">程序尚未运行</span></div>
<div style="position:absolute;left:1051px;top:635px;width:146px;height:17px;border-top:1px solid #9a9a9a;border-left:1px solid #9a9a9a;"></div>
<div class="t ui" style="left:1055px;top:636px;color:#000;"><span class="cj" style="width:60px">已调试时间</span><span class="as" style="width:6px"><span class="asi">:</span></span></div>
<div class="t ui" style="left:1132px;top:636px;color:#000;"><span class="as" style="width:60px"><span class="asi">0:03:48:04</span></span></div>
<div style="position:absolute;left:0px;top:653px;width:1198px;height:2px;background:#f0f0f0;"></div>
<div style="position:absolute;left:0px;top:0px;width:1px;height:655px;background:#6a6a6a;"></div>
<div style="position:absolute;left:1197px;top:0px;width:1px;height:655px;background:#8a8a8a;"></div>
<div style="position:absolute;left:0px;top:654px;width:1198px;height:1px;background:#707070;"></div>
</body></html>
